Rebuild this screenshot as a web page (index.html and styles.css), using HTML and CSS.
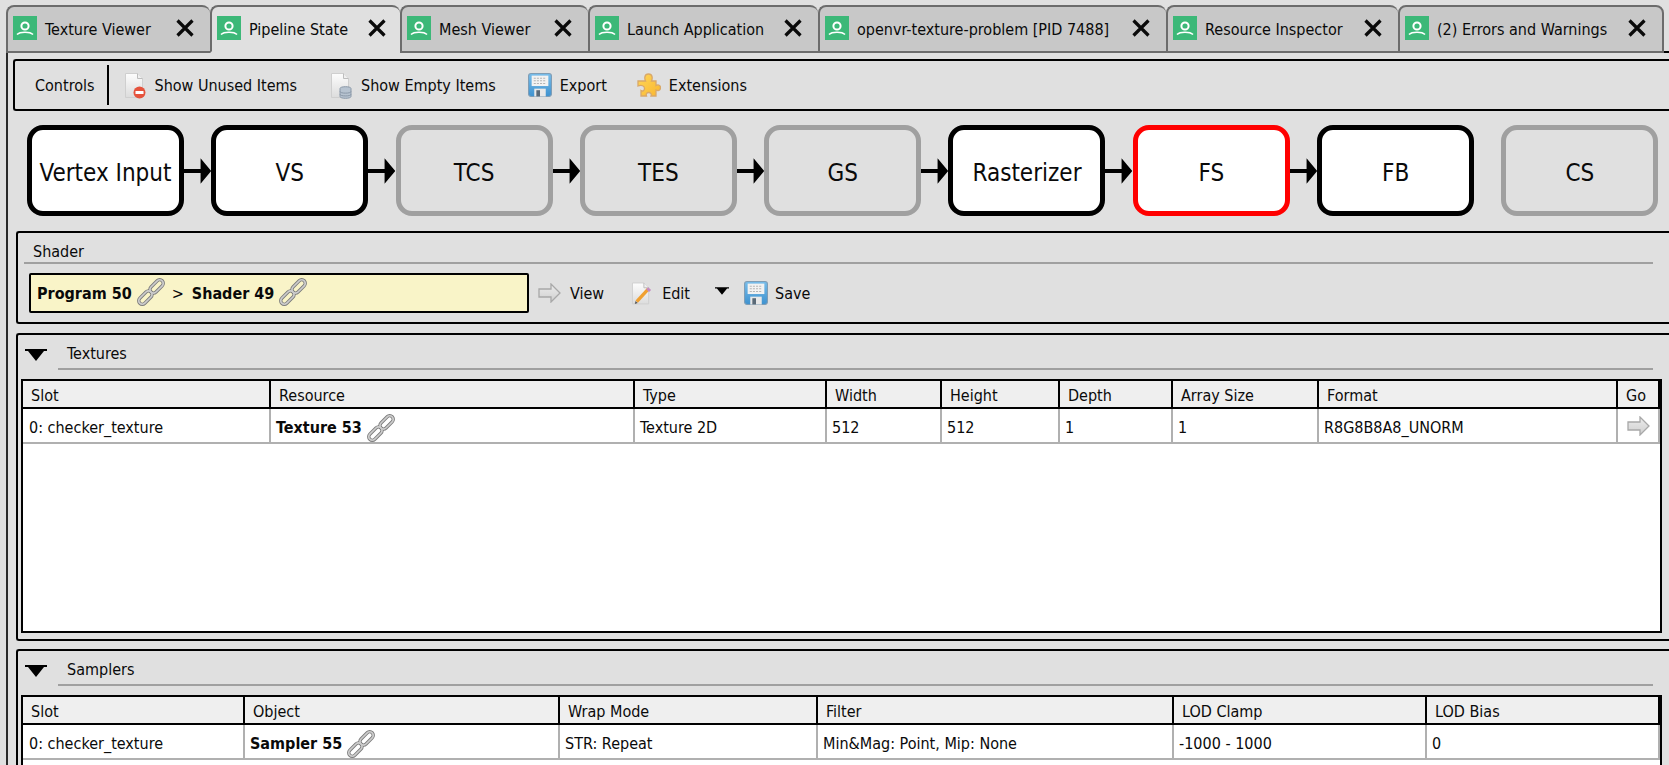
FILE: index.html
```html
<!DOCTYPE html>
<html lang="en">
<head>
<meta charset="utf-8">
<title>Pipeline State</title>
<link rel="stylesheet" href="styles.css">
</head>
<body>
<svg class="sprite" aria-hidden="true">
  <defs>
    <linearGradient id="gDoc" x1="0" y1="0" x2="0" y2="1"><stop offset="0" stop-color="#fdfdfd"/><stop offset="1" stop-color="#dcdcdc"/></linearGradient>
    <linearGradient id="gBlue" x1="0" y1="0" x2="0" y2="1"><stop offset="0" stop-color="#78bdea"/><stop offset="1" stop-color="#3f92cf"/></linearGradient>
    <linearGradient id="gGold" x1="0" y1="0" x2="1" y2="1"><stop offset="0" stop-color="#ffd75a"/><stop offset="1" stop-color="#f9b62e"/></linearGradient>
    <linearGradient id="gArrow" x1="0" y1="0" x2="0" y2="1"><stop offset="0" stop-color="#ececec"/><stop offset="1" stop-color="#cfcfcf"/></linearGradient>
  </defs>
  <symbol id="i-tab" viewBox="0 0 24 24">
    <rect width="24" height="24" fill="#3cb878"/>
    <circle cx="12" cy="10" r="3.6" fill="none" stroke="#fff" stroke-width="2"/>
    <path d="M4 18.5c3-3 13-3 16 0" fill="none" stroke="#fff" stroke-width="1.6"/>
  </symbol>
  <symbol id="i-x" viewBox="0 0 18 18">
    <path d="M1.500 1.500l15 15M16.500 1.500l-15 15" stroke="#0a0a0a" stroke-width="3.2" fill="none"/>
  </symbol>
  <symbol id="i-unused" viewBox="0 0 24 28">
    <path d="M2.500 2.500h12l5 5v19h-17z" fill="url(#gDoc)" stroke="#cfcfcf"/>
    <path d="M14.500 2.500v5h5" fill="#efefef" stroke="#bdbdbd"/>
    <circle cx="16.500" cy="21.500" r="6" fill="#e5533d"/>
    <rect x="12.500" y="20" width="8" height="3" fill="#fff"/>
  </symbol>
  <symbol id="i-empty" viewBox="0 0 24 28">
    <path d="M2.500 2.500h12l5 5v19h-17z" fill="url(#gDoc)" stroke="#cfcfcf"/>
    <path d="M14.500 2.500v5h5" fill="#efefef" stroke="#bdbdbd"/>
    <path d="M11 17.500c0-2.400 11-2.400 11 0v8c0 2.400-11 2.400-11 0z" fill="#b7c3d0" stroke="#8a98a8"/>
    <path d="M11 20.500c0 2.200 11 2.200 11 0M11 23.300c0 2.200 11 2.200 11 0" fill="none" stroke="#8a98a8"/>
  </symbol>
  <symbol id="i-save" viewBox="0 0 23 23">
    <rect x=".5" y=".5" width="22" height="22" rx="2.500" fill="url(#gBlue)" stroke="#7f9db5"/>
    <rect x="3.500" y="2.500" width="16" height="10" fill="#f2f2f2"/>
    <path d="M5.500 5h12M5.500 7.500h12M5.500 10h12" stroke="#b5b5b5" stroke-dasharray="2 1"/>
    <rect x="6" y="15" width="11" height="7.500" fill="#e8e8e8"/>
    <rect x="8" y="16.500" width="3.500" height="6" fill="#5a6a78"/>
  </symbol>
  <symbol id="i-puzzle" viewBox="0 0 24 24">
    <path d="M1 8h7.500C7.500 6 7 1 11.500 1S15.500 6 14.500 8H19v4.500c1.500-1 4.500-1 4.500 2.200s-3 3.200-4.500 2.300V23h-5c.8-2-.3-3.500-2.300-3.500S8.800 21 9.500 23H4v-5.500c1.500 1 3.500.5 3.500-2S4.500 11.500 1 13V8z" fill="url(#gGold)" stroke="#d9a868" stroke-width="1.300"/>
  </symbol>
  <symbol id="i-arrow" viewBox="0 0 23 20">
    <path d="M1 6h12V1l9 9-9 9v-5H1z" fill="url(#gArrow)" stroke="#a8a8a8" stroke-width="1.300"/>
  </symbol>
  <symbol id="i-edit" viewBox="0 0 22 24">
    <path d="M1.500 1.500h12l5 5v17h-17z" fill="url(#gDoc)" stroke="#cfcfcf"/>
    <path d="M13.500 1.500v5h5" fill="#efefef" stroke="#bdbdbd"/>
    <path d="M18 8l-12 13" stroke="#f0a030" stroke-width="3.500"/>
    <path d="M17 7l3 3" stroke="#c58ac0" stroke-width="3"/>
    <path d="M7 22.500l-3 1 .8-3.200z" fill="#555"/>
  </symbol>
  <symbol id="i-link" viewBox="0 0 30 30">
    <g fill="none">
      <g stroke="#7c7c7c" stroke-width="3.600">
        <rect x="-8.500" y="-3.800" width="17" height="7.600" rx="3.800" transform="translate(9 21) rotate(-45)"/>
        <rect x="-8.500" y="-3.800" width="17" height="7.600" rx="3.800" transform="translate(21 9) rotate(-45)"/>
      </g>
      <g stroke="#cdcdcd" stroke-width="1.800">
        <rect x="-8.500" y="-3.800" width="17" height="7.600" rx="3.800" transform="translate(9 21) rotate(-45)"/>
        <rect x="-8.500" y="-3.800" width="17" height="7.600" rx="3.800" transform="translate(21 9) rotate(-45)"/>
      </g>
    </g>
  </symbol>
  <symbol id="i-flow" viewBox="0 0 28 26">
    <path d="M0 11h17V0l11 13-11 13V15H0z" fill="#000"/>
  </symbol>
  <symbol id="i-tri" viewBox="0 0 22 12">
    <path d="M0 0h22v2h-3l-8 10-8-10H0z" fill="#000"/>
  </symbol>
</svg>

<div class="app">
  <nav class="tabs">
    <div class="tab"><svg class="tab-icon"><use href="#i-tab"/></svg><span class="tab-label">Texture Viewer</span><svg class="tab-x"><use href="#i-x"/></svg></div>
    <div class="tab active"><svg class="tab-icon"><use href="#i-tab"/></svg><span class="tab-label">Pipeline State</span><svg class="tab-x"><use href="#i-x"/></svg></div>
    <div class="tab"><svg class="tab-icon"><use href="#i-tab"/></svg><span class="tab-label">Mesh Viewer</span><svg class="tab-x"><use href="#i-x"/></svg></div>
    <div class="tab"><svg class="tab-icon"><use href="#i-tab"/></svg><span class="tab-label">Launch Application</span><svg class="tab-x"><use href="#i-x"/></svg></div>
    <div class="tab"><svg class="tab-icon"><use href="#i-tab"/></svg><span class="tab-label">openvr-texture-problem [PID 7488]</span><svg class="tab-x"><use href="#i-x"/></svg></div>
    <div class="tab"><svg class="tab-icon"><use href="#i-tab"/></svg><span class="tab-label">Resource Inspector</span><svg class="tab-x"><use href="#i-x"/></svg></div>
    <div class="tab"><svg class="tab-icon"><use href="#i-tab"/></svg><span class="tab-label">(2) Errors and Warnings</span><svg class="tab-x"><use href="#i-x"/></svg></div>
    <div class="tabs-rest"></div>
  </nav>

  <main class="pane">
    <div class="toolbar">
      <span class="toolbar-title">Controls</span>
      <div class="btn"><svg class="ic-doc"><use href="#i-unused"/></svg><span>Show Unused Items</span></div>
      <div class="btn"><svg class="ic-doc"><use href="#i-empty"/></svg><span>Show Empty Items</span></div>
      <div class="btn btn-export"><svg class="ic-save"><use href="#i-save"/></svg><span>Export</span></div>
      <div class="btn"><svg class="ic-save"><use href="#i-puzzle"/></svg><span>Extensions</span></div>
    </div>

    <div class="pipeline">
      <div class="node">Vertex Input</div><svg class="flow"><use href="#i-flow"/></svg>
      <div class="node">VS</div><svg class="flow"><use href="#i-flow"/></svg>
      <div class="node off">TCS</div><svg class="flow"><use href="#i-flow"/></svg>
      <div class="node off">TES</div><svg class="flow"><use href="#i-flow"/></svg>
      <div class="node off">GS</div><svg class="flow"><use href="#i-flow"/></svg>
      <div class="node">Rasterizer</div><svg class="flow"><use href="#i-flow"/></svg>
      <div class="node sel">FS</div><svg class="flow"><use href="#i-flow"/></svg>
      <div class="node">FB</div><div class="flow"></div>
      <div class="node off">CS</div>
    </div>

    <section class="group shader">
      <div class="shader-title">Shader</div>
      <div class="shader-row">
        <div class="shader-name"><b>Program 50</b><svg class="ic-link"><use href="#i-link"/></svg><span class="gt">&gt;</span><b>Shader 49</b><svg class="ic-link"><use href="#i-link"/></svg></div>
        <div class="act act-view"><svg class="ic-arrow"><use href="#i-arrow"/></svg><span>View</span></div>
        <div class="act act-edit"><svg class="ic-edit"><use href="#i-edit"/></svg><span>Edit</span></div>
        <svg class="tri-small"><use href="#i-tri"/></svg>
        <div class="act act-save"><svg class="ic-save"><use href="#i-save"/></svg><span>Save</span></div>
      </div>
    </section>

    <section class="group textures">
      <header class="group-head"><svg class="tri"><use href="#i-tri"/></svg><div class="group-title">Textures</div></header>
      <div class="table">
        <div class="thead cols-tex">
          <div>Slot</div><div>Resource</div><div>Type</div><div>Width</div><div>Height</div><div>Depth</div><div>Array Size</div><div>Format</div><div>Go</div>
        </div>
        <div class="trow cols-tex">
          <div>0: checker_texture</div>
          <div class="res"><b>Texture 53</b><svg class="ic-link"><use href="#i-link"/></svg></div>
          <div>Texture 2D</div><div>512</div><div>512</div><div>1</div><div>1</div><div>R8G8B8A8_UNORM</div>
          <div class="go"><svg class="ic-go"><use href="#i-arrow"/></svg></div>
        </div>
      </div>
    </section>

    <section class="group samplers">
      <header class="group-head"><svg class="tri"><use href="#i-tri"/></svg><div class="group-title">Samplers</div></header>
      <div class="table">
        <div class="thead cols-smp">
          <div>Slot</div><div>Object</div><div>Wrap Mode</div><div>Filter</div><div>LOD Clamp</div><div>LOD Bias</div>
        </div>
        <div class="trow cols-smp">
          <div>0: checker_texture</div>
          <div class="res"><b>Sampler 55</b><svg class="ic-link"><use href="#i-link"/></svg></div>
          <div>STR: Repeat</div><div>Min&amp;Mag: Point, Mip: None</div><div>-1000 - 1000</div><div>0</div>
        </div>
      </div>
    </section>
  </main>
</div>
</body>
</html>
```

FILE: styles.css
```css
* { box-sizing: border-box; }
html, body { margin: 0; padding: 0; }
body {
  width: 1669px;
  height: 765px;
  overflow: hidden;
  background: #e0e0e0;
  color: #0a0a0a;
  font-family: "DejaVu Sans Condensed", "DejaVu Sans", sans-serif;
  font-stretch: condensed;
  font-size: 16px;
}
b { font-weight: 700; }
svg { display: block; flex: none; }
.sprite { position: absolute; width: 0; height: 0; }
.app { height: 765px; display: flex; flex-direction: column; overflow: hidden; }

/* tabs */
.tabs { display: flex; height: 53px; padding: 5px 0 0 6px; flex: none; }
.tab {
  display: flex;
  align-items: center;
  height: 48px;
  padding: 0 16px 0 5px;
  background: #c8c8c8;
  border: 2px solid #6c6c6c;
  border-right: 0;
  border-radius: 8px 8px 0 0;
}
.tab:nth-child(1) { width: 204px; }
.tab:nth-child(2) { width: 190px; padding-right: 14px; }
.tab:nth-child(3) { width: 188px; }
.tab:nth-child(4) { width: 230px; }
.tab:nth-child(5) { width: 348px; }
.tab:nth-child(6) { width: 232px; }
.tab:nth-child(7) { width: 266px; border-right: 2px solid #6c6c6c; }
.tab.active { background: #e0e0e0; border-bottom-color: #e0e0e0; }
.tab-icon { width: 24px; height: 24px; margin-top: -2px; }
.tab-label { margin-left: 8px; white-space: nowrap; flex: 1; }
.tab-x { width: 18px; height: 18px; margin-top: -2px; }
.tabs-rest { flex: 1; border-bottom: 2px solid #000; }

/* pane */
.pane {
  flex: 1;
  margin-left: 6px;
  padding: 6px 0 0 8px;
  border-left: 2px solid #2a2a2a;
  min-height: 0;
}

/* toolbar */
.toolbar {
  display: flex;
  align-items: center;
  height: 52px;
  margin-left: -3px;
  padding: 4px 0 4px 20px;
  border: 2px solid #000;
  border-right: 0;
  border-radius: 3px 0 0 3px;
}
.toolbar-title {
  display: flex;
  align-items: center;
  align-self: stretch;
  padding-right: 12px;
  margin-right: 14px;
  border-right: 2px solid #000;
}
.btn { display: flex; align-items: center; gap: 8px; margin-right: 32px; }
.btn-export { margin-right: 30px; }
.ic-doc { width: 24px; height: 28px; }
.ic-save { width: 24px; height: 24px; }

/* pipeline */
.pipeline { display: flex; align-items: center; margin: 14px 0 15px 11px; height: 91px; }
.node {
  display: flex;
  align-items: center;
  justify-content: center;
  flex: none;
  width: 157px;
  height: 91px;
  padding-top: 5px;
  background: #fff;
  border: 5px solid #000;
  border-radius: 16px;
  font-size: 24px;
}
.node.off { background: #e0e0e0; border-color: #a0a0a0; }
.node.sel { border-color: #f00; }
.flow { width: 27.3px; height: 26px; flex: none; }

/* groups */
.group {
  border: 2px solid #000;
  border-right: 0;
  border-radius: 3px 0 0 3px;
  padding: 0 0 0 3px;
}
.shader { height: 93px; }
.textures { height: 308px; margin-top: 9px; }
.samplers { height: 200px; margin-top: 8px; }

.shader-title {
  height: 31px;
  margin: 0 16px 0 3px;
  padding: 9px 0 0 9px;
  border-bottom: 2px solid #a0a0a0;
}
.shader-row { display: flex; align-items: center; margin: 9px 0 0 8px; }
.shader-name {
  display: flex;
  align-items: center;
  width: 500px;
  height: 40px;
  padding-left: 6px;
  background: #f9f4c8;
  border: 2px solid #000;
  border-radius: 2px;
}
.shader-name .ic-link { margin: 0 0 2px 5px; }
.gt { margin: 0 8px 0 7px; }
.act { display: flex; align-items: center; gap: 9px; }
.act-view { margin-left: 9px; }
.act-edit { margin-left: 27px; gap: 10px; }
.act-save { margin-left: 15px; gap: 7px; }
.ic-arrow { width: 23px; height: 20px; }
.ic-edit { width: 21px; height: 24px; }
.tri-small { width: 14px; height: 8px; margin: -4px 0 0 25px; }

.ic-link { width: 28px; height: 28px; }
.ic-go { width: 23px; height: 20px; }

.group-head { display: flex; align-items: flex-start; margin: 0 16px 0 1px; }
.tri { width: 22px; height: 12px; margin: 14px 0 0 3px; }
.group-title {
  flex: 1;
  height: 35px;
  margin-left: 11px;
  padding: 9px 0 0 9px;
  border-bottom: 2px solid #a0a0a0;
}

/* tables */
.table {
  margin: 9px 7px 0 0;
  height: 254px;
  background: #fff;
  border: 2px solid #000;
}
.thead, .trow { display: grid; }
.cols-tex { grid-template-columns: 248px 364px 192px 115px 118px 113px 146px 299px 1fr; }
.cols-smp { grid-template-columns: 222px 315px 258px 356px 253px 1fr; }
.thead {
  height: 28px;
  background: #efefef;
  border-bottom: 2px solid #000;
  border-right: 3px solid #000;
  margin-right: -1px;
}
.thead > div {
  display: flex;
  align-items: center;
  padding: 2px 0 0 8px;
  border-right: 2px solid #000;
}
.thead > div:last-child { border-right: 0; }
.trow {
  height: 35px;
  border-bottom: 2px solid #b0b0b0;
  border-right: 2px solid #b0b0b0;
}
.trow > div {
  display: flex;
  align-items: center;
  padding: 4px 0 0 5px;
  border-right: 2px solid #b0b0b0;
  white-space: nowrap;
}
.trow > div:first-child { padding-left: 6px; }
.trow > div:last-child { border-right: 0; }
.res .ic-link { margin: 1px 0 0 5px; }
.trow > .go { justify-content: center; padding: 0; }
```
